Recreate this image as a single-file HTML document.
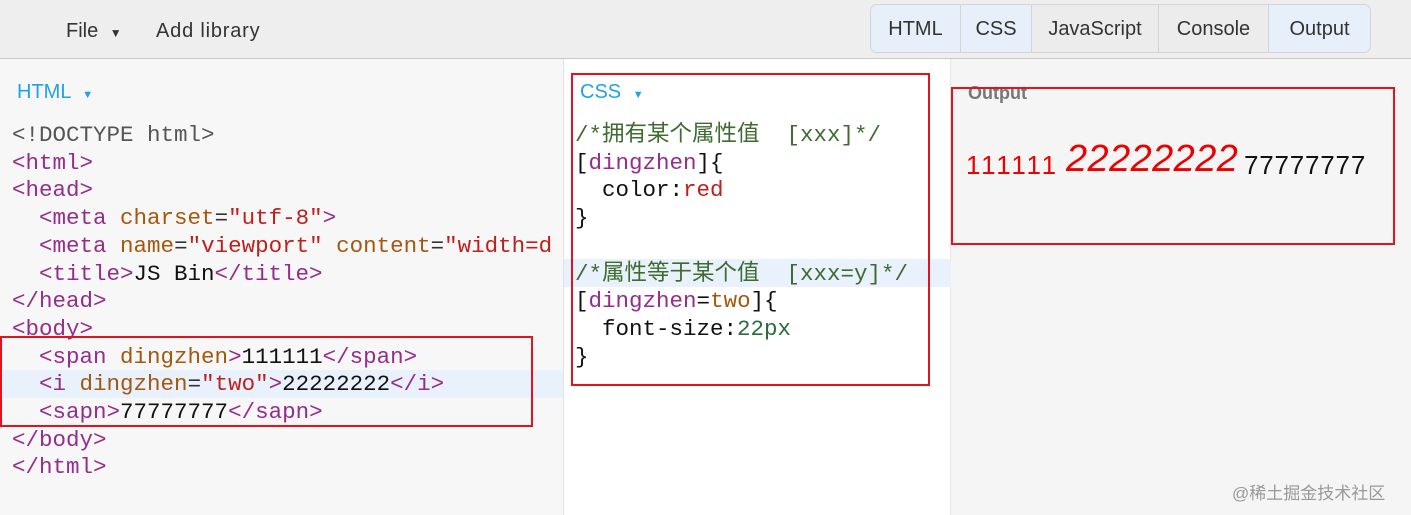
<!DOCTYPE html>
<html><head><meta charset="utf-8"><style>
*{margin:0;padding:0;box-sizing:border-box}
body{width:1411px;height:515px;overflow:hidden;position:relative;background:#f7f7f7;font-family:"Liberation Sans","Noto Sans CJK SC",sans-serif}
.top{position:absolute;left:0;top:0;width:1411px;height:59px;background:#eeeeee;border-bottom:1px solid #c8c8c8}
.top span{position:absolute;top:20px;font-size:20px;color:#333}
.tabs{position:absolute;left:870px;top:4px;width:501px;height:49px;border:1px solid #d4d4d4;border-radius:7px;overflow:hidden;display:flex}
.tabs div{height:100%;font-size:20px;color:#333;display:flex;align-items:center;justify-content:center;border-right:1px solid #d4d4d4;padding-top:2px}
.tabs div:last-child{border-right:none}
.on{background:#e6effa}.off{background:#ececec}
.pane{position:absolute;top:59px;height:456px}
.code{position:absolute;font-family:"Liberation Mono","Noto Sans CJK SC",monospace;font-size:22.5px;line-height:27.7px;white-space:pre;color:#333}
.t{color:#962c8c}.a{color:#a5570e}.s{color:#c0201c}.k{color:#111}.c{color:#3f6b30}.n{color:#2b6b3a}
.hl{position:absolute;height:28px;background:#e8f1fc}
.box{position:absolute;border:2px solid #e0141e}
.lbl{position:absolute;font-size:20px;color:#1ea3e6}
.o{position:absolute;white-space:nowrap}
</style></head><body>
<div class="top">
<span style="left:66px">File <span style="position:static;font-size:12px;margin-left:6px">▼</span></span>
<span style="left:156px;letter-spacing:0.8px">Add library</span>
<div class="tabs">
<div class="on" style="width:90px">HTML</div>
<div class="on" style="width:71px">CSS</div>
<div class="off" style="width:127px">JavaScript</div>
<div class="off" style="width:110px">Console</div>
<div class="on" style="flex:1">Output</div>
</div>
</div>
<div class="pane" style="left:0;width:564px;background:#f7f7f7;border-right:1px solid #e2e2e2"></div>
<div class="pane" style="left:564px;width:387px;background:#fff;border-right:1px solid #e6e6e6"></div>
<div class="pane" style="left:951px;width:460px;background:#f5f5f5"></div>
<div class="hl" style="left:0;top:370px;width:563px"></div>
<div class="hl" style="left:564px;top:259px;width:387px"></div>
<div class="lbl" style="left:17px;top:81px">HTML <span style="font-size:11px;margin-left:6px">▼</span></div>
<div class="lbl" style="left:580px;top:81px">CSS <span style="font-size:11px;margin-left:6px">▼</span></div>
<div class="code" style="left:12px;top:122px"><span style="color:#555">&lt;!DOCTYPE html&gt;</span>
<span class="t">&lt;html&gt;</span>
<span class="t">&lt;head&gt;</span>
  <span class="t">&lt;meta</span> <span class="a">charset</span>=<span class="s">"utf-8"</span><span class="t">&gt;</span>
  <span class="t">&lt;meta</span> <span class="a">name</span>=<span class="s">"viewport"</span> <span class="a">content</span>=<span class="s">"width=d</span>
  <span class="t">&lt;title&gt;</span><span class="k">JS Bin</span><span class="t">&lt;/title&gt;</span>
<span class="t">&lt;/head&gt;</span>
<span class="t">&lt;body&gt;</span>
  <span class="t">&lt;span</span> <span class="a">dingzhen</span><span class="t">&gt;</span><span class="k">111111</span><span class="t">&lt;/span&gt;</span>
  <span class="t">&lt;i</span> <span class="a">dingzhen</span>=<span class="s">"two"</span><span class="t">&gt;</span><span class="k">22222222</span><span class="t">&lt;/i&gt;</span>
  <span class="t">&lt;sapn&gt;</span><span class="k">77777777</span><span class="t">&lt;/sapn&gt;</span>
<span class="t">&lt;/body&gt;</span>
<span class="t">&lt;/html&gt;</span></div>
<div class="code" style="left:575px;top:122px"><span class="c">/*拥有某个属性值  [xxx]*/</span>
<span class="k">[</span><span class="t">dingzhen</span><span class="k">]{</span>
  <span class="k">color:</span><span class="s">red</span>
<span class="k">}</span>

<span class="c">/*属性等于某个值  [xxx=y]*/</span>
<span class="k">[</span><span class="t">dingzhen</span><span class="k">=</span><span class="a">two</span><span class="k">]{</span>
  <span class="k">font-size:</span><span class="n">22px</span>
<span class="k">}</span></div>
<div style="position:absolute;left:968px;top:83px;font-size:18px;font-weight:bold;color:#777">Output</div>
<div class="o" style="left:966px;top:150px;font-size:26px;color:#e00;letter-spacing:2.6px">111111</div>
<div class="o" style="left:1066px;top:138px;font-size:38px;color:#e00;font-style:italic;letter-spacing:0.4px">22222222</div>
<div class="o" style="left:1244px;top:150px;font-size:26px;color:#111;letter-spacing:0.8px">77777777</div>
<div class="box" style="left:0;top:336px;width:533px;height:91px"></div>
<div class="box" style="left:571px;top:73px;width:359px;height:313px"></div>
<div class="box" style="left:951px;top:87px;width:444px;height:158px"></div>
<div style="position:absolute;left:1232px;top:479px;font-size:17px;color:#999">@稀土掘金技术社区</div>
</body></html>
